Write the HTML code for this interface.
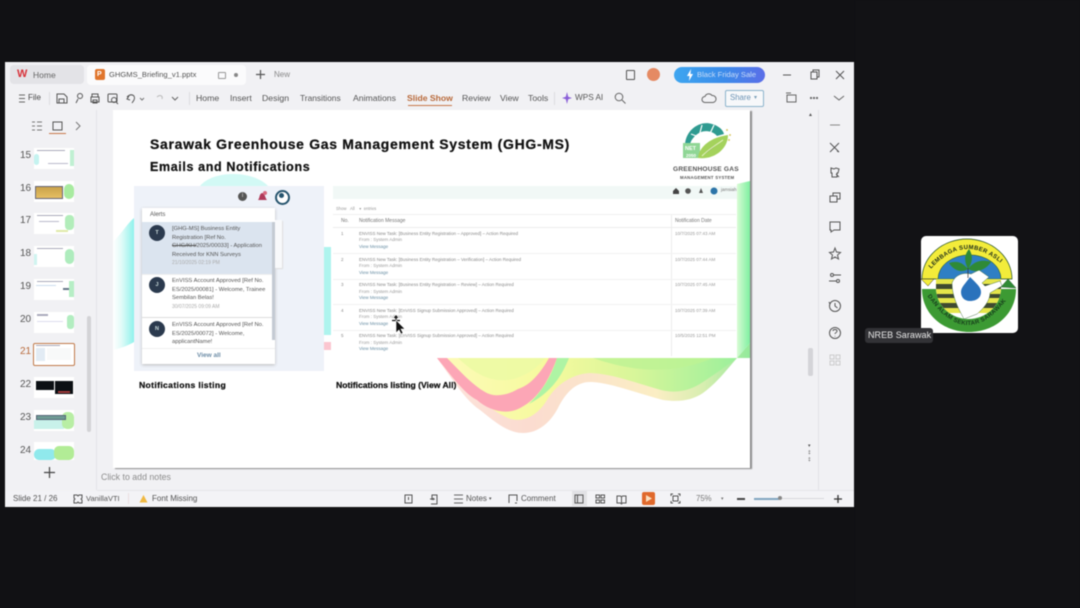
<!DOCTYPE html>
<html><head><meta charset="utf-8"><style>
html,body{margin:0;padding:0;width:1080px;height:608px;overflow:hidden;background:#111114}
body{position:relative;font-family:"Liberation Sans",sans-serif}
#all{position:absolute;left:0;top:0;width:1080px;height:608px;filter:blur(.45px)}
.a{position:absolute}
.t{position:absolute;white-space:nowrap;line-height:1}
.mn{position:absolute;white-space:nowrap;line-height:1;top:94px;font-size:8.700px;color:#555}
.th{position:absolute;left:34px;width:40px;height:21px;background:#fff;overflow:hidden}
.tl{position:absolute;font-size:10px;color:#555;left:20px;width:12px;line-height:1}
.alert{position:absolute;left:172px;font-size:5.800px;line-height:8.500px;color:#555;white-space:nowrap}
.d{position:absolute;left:172px;font-size:5px;color:#aaa;white-space:nowrap;line-height:1}
.av{position:absolute;left:149px;width:16px;height:16px;border-radius:50%;background:#2b3a4e;color:#cdd;font-size:5.500px;font-weight:bold;text-align:center;line-height:16px}
.r1{position:absolute;left:359px;font-size:4.500px;color:#888;white-space:nowrap;line-height:1}
.r2{position:absolute;left:359px;font-size:4.500px;color:#999;white-space:nowrap;line-height:1}
.r3{position:absolute;left:359px;font-size:4.500px;color:#6a8fa5;white-space:nowrap;line-height:1}
.rn{position:absolute;left:341px;font-size:4.500px;color:#888;line-height:1}
.rd{position:absolute;left:675px;font-size:4.500px;color:#999;white-space:nowrap;line-height:1}
.b{-webkit-text-stroke:.25px #111}
svg{position:absolute;overflow:visible}
</style></head><body><div id="all">
<div class="a" style="left:855px;top:0;width:225px;height:608px;background:#121215"></div>
<!-- window -->
<div class="a" style="left:5px;top:62px;width:849px;height:445px;background:#f1f1f4"></div>
<!-- tabs -->
<div class="a" style="left:10px;top:65px;width:74px;height:19px;background:#e3e3e7;border-radius:4px"></div>
<div class="t" style="left:17px;top:69px;font-size:11px;font-weight:bold;color:#d8323a">W</div>
<div class="t" style="left:33px;top:71px;font-size:8.500px;color:#666">Home</div>
<div class="a" style="left:87px;top:65px;width:159px;height:20px;background:#fbfbfc;border-radius:4px"></div>
<div class="a" style="left:95px;top:69px;width:10px;height:11px;background:#e0752c;border-radius:2px"></div>
<div class="t" style="left:97px;top:71px;font-size:7px;color:#fff;font-weight:bold">P</div>
<div class="t" style="left:109px;top:71px;font-size:7.600px;color:#555">GHGMS_Briefing_v1.pptx</div>
<div class="a" style="left:218px;top:72px;width:6px;height:5px;border:1px solid #999;border-radius:1px"></div>
<div class="a" style="left:234px;top:73px;width:4px;height:4px;background:#888;border-radius:50%"></div>
<svg style="left:255px;top:69px" width="11" height="11"><path d="M5.500 1v9M1 5.500h9" stroke="#555" stroke-width="1.200"/></svg>
<div class="t" style="left:274px;top:71px;font-size:8px;color:#888">New</div>
<!-- top right -->
<div class="a" style="left:626px;top:70px;width:7px;height:8px;border:1.200px solid #555;border-radius:1px"></div>
<div class="a" style="left:647px;top:68px;width:13px;height:13px;border-radius:50%;background:#e58a63"></div>
<div class="a" style="left:674px;top:67px;width:91px;height:16px;border-radius:8px;background:linear-gradient(90deg,#3ea6f0,#3b8bea 55%,#5b6ee8)"></div>
<svg style="left:686px;top:69px" width="8" height="12"><path d="M5 0L1 7h2.500L3 12l4-7H4.500z" fill="#fff"/></svg>
<div class="t" style="left:697px;top:71px;font-size:7.600px;color:#c8dcf8">Black Friday Sale</div>
<svg style="left:782px;top:69px" width="62" height="12"><path d="M1 6h8" stroke="#555"/><rect x="29" y="3" width="6" height="7" fill="none" stroke="#555"/><path d="M31 3V1h6v7h-2" fill="none" stroke="#555"/><path d="M54 2l8 8M62 2l-8 8" stroke="#555"/></svg>
<!-- menu bar -->
<svg style="left:18px;top:94px" width="8" height="9"><path d="M1 1h6M1 4.500h6M1 8h6" stroke="#666"/></svg>
<div class="t" style="left:28px;top:94px;font-size:8px;color:#444">File</div>
<div class="a" style="left:49px;top:92px;width:1px;height:13px;background:#dcdce0"></div>
<svg style="left:56px;top:92px" width="125" height="13" fill="none" stroke="#555"><path d="M1 2h7l3 3v6H1zM3 11V7h5v4"/><circle cx="24" cy="4" r="2.500"/><path d="M22 7l-2 4"/><path d="M36 5V2h6v3M35 5h8v5h-8zM37 8h4v3h-4z"/><rect x="52" y="2" width="9" height="8" rx="1"/><circle cx="58" cy="8" r="2.500"/><path d="M60 10l2 2"/><path d="M73 4l-2 3 3 1M71 5c4-4 9-2 7 3l-2 3"/><path d="M84 6l2 2 2-2" stroke="#777"/><path d="M101 5c3-3 6-1 5 2" stroke="#bbb"/><path d="M116 5l3 3 3-3" stroke="#666"/></svg>
<div class="a" style="left:189px;top:92px;width:1px;height:13px;background:#dcdce0"></div>
<div class="mn" style="left:196px">Home</div>
<div class="mn" style="left:230px">Insert</div>
<div class="mn" style="left:262px">Design</div>
<div class="mn" style="left:300px;font-size:8.400px">Transitions</div>
<div class="mn" style="left:353px">Animations</div>
<div class="mn" style="left:407px;color:#b8693a;font-weight:bold;font-size:8.600px">Slide Show</div>
<div class="a" style="left:408px;top:105px;width:44px;height:1px;background:#c8784a"></div>
<div class="mn" style="left:462px">Review</div>
<div class="mn" style="left:500px">View</div>
<div class="mn" style="left:528px">Tools</div>
<div class="a" style="left:554px;top:92px;width:1px;height:13px;background:#dcdce0"></div>
<svg style="left:562px;top:92px" width="10" height="12"><path d="M5 0l1.200 4.800L10 6 6.200 7.200 5 12 3.800 7.200 0 6l3.800-1.200z" fill="#8a5fd8"/></svg>
<div class="mn" style="left:575px;font-size:8.200px">WPS AI</div>
<svg style="left:614px;top:92px" width="12" height="12" fill="none" stroke="#666"><circle cx="5" cy="5" r="3.800"/><path d="M8 8l3.500 3.500"/></svg>
<svg style="left:702px;top:93px" width="13" height="11" fill="none" stroke="#666"><path d="M3 9.500a3 3 0 010-6 4 4 0 017-1 3 3 0 011 7z"/></svg>
<div class="a" style="left:725px;top:90px;width:37px;height:15px;border:1px solid #8cb4cc;border-radius:2px;background:#f7f8fa"></div>
<div class="t" style="left:730px;top:94px;font-size:7.800px;color:#6b93b5">Share</div>
<div class="t" style="left:754px;top:95px;font-size:6px;color:#7a9fb8">▾</div>
<svg style="left:785px;top:92px" width="60" height="13" fill="none" stroke="#666"><rect x="2" y="3" width="9" height="7"/><path d="M1 1h5"/><circle cx="26" cy="6" r=".6"/><circle cx="29" cy="6" r=".6"/><circle cx="32" cy="6" r=".6"/><path d="M49 4l5 4 5-4"/></svg>
<!-- left pane -->
<div class="a" style="left:96px;top:110px;width:1px;height:380px;background:#e4e4e8"></div>
<svg style="left:31px;top:120px" width="55" height="13" fill="none" stroke="#666"><path d="M1 2h3M1 6h3M1 10h3M6 2h5M6 6h5M6 10h5" stroke="#777"/><rect x="22" y="2" width="9" height="8" stroke="#555"/><path d="M45 2l4 4-4 4" stroke="#777"/></svg>
<div class="a" style="left:49px;top:133px;width:17px;height:1px;background:#c8784a"></div>
<div class="tl" style="top:151px">15</div><div class="tl" style="top:184px">16</div><div class="tl" style="top:216px">17</div><div class="tl" style="top:249px">18</div><div class="tl" style="top:282px">19</div><div class="tl" style="top:315px">20</div><div class="tl" style="top:347px;color:#b8693a">21</div><div class="tl" style="top:380px">22</div><div class="tl" style="top:413px">23</div><div class="tl" style="top:446px">24</div>
<div class="th" style="top:148px"><div class="a" style="left:0;top:6px;width:5px;height:11px;background:#c5f3f0;border-radius:3px"></div><div class="a" style="left:36px;top:2px;width:4px;height:16px;background:#c0f0d2"></div><div class="a" style="left:3px;top:2px;width:28px;height:1px;background:#aab"></div><div class="a" style="left:14px;top:15px;width:20px;height:1px;background:#bbc"></div></div>
<div class="th" style="top:181px"><div class="a" style="left:1px;top:5px;width:28px;height:13px;background:linear-gradient(#c9a24a,#e6bf63);border:1px solid #667;box-sizing:border-box"></div><div class="a" style="left:30px;top:3px;width:10px;height:15px;background:#a8eba0;border-radius:5px"></div></div>
<div class="th" style="top:213px"><div class="a" style="left:31px;top:2px;width:9px;height:15px;background:#b2edba;border-radius:4px"></div><div class="a" style="left:3px;top:2px;width:26px;height:1px;background:#aab"></div><div class="a" style="left:5px;top:8px;width:20px;height:1px;background:#bbc"></div><div class="a" style="left:22px;top:17px;width:12px;height:2px;background:#e0eaa8"></div></div>
<div class="th" style="top:246px"><div class="a" style="left:31px;top:3px;width:9px;height:15px;background:#aeecbd;border-radius:5px"></div><div class="a" style="left:3px;top:2px;width:26px;height:1px;background:#aab"></div><div class="a" style="left:0;top:8px;width:3px;height:11px;background:#d0f4f0"></div></div>
<div class="th" style="top:279px"><div class="a" style="left:35px;top:2px;width:5px;height:16px;background:#b6eec5"></div><div class="a" style="left:3px;top:2px;width:26px;height:1px;background:#aab"></div><div class="a" style="left:29px;top:9px;width:6px;height:2px;background:#678"></div><div class="a" style="left:2px;top:6px;width:20px;height:1px;background:#cde"></div></div>
<div class="th" style="top:312px"><div class="a" style="left:33px;top:3px;width:7px;height:14px;background:#b2edc0;border-radius:3px"></div><div class="a" style="left:3px;top:2px;width:11px;height:2px;background:#aab"></div><div class="a" style="left:3px;top:9px;width:26px;height:1px;background:#dde"></div></div>
<div class="a" style="left:33px;top:343px;width:40px;height:21px;border:1.500px solid #c07a4a;border-radius:2px;background:#fff"><div class="a" style="left:2px;top:4px;width:9px;height:13px;background:#e2ebf4"></div><div class="a" style="left:13px;top:4px;width:24px;height:12px;background:#f8f9f9"></div><div class="a" style="left:2px;top:1px;width:24px;height:1px;background:#aab"></div></div>
<div class="th" style="top:377px"><div class="a" style="left:2px;top:4px;width:18px;height:9px;background:#0c1014"></div><div class="a" style="left:21px;top:4px;width:18px;height:13px;background:#0c1014"></div><div class="a" style="left:24px;top:14px;width:12px;height:2px;background:#a03a3a"></div></div>
<div class="th" style="top:410px"><div class="a" style="left:0;top:10px;width:30px;height:9px;background:#c8f1ea"></div><div class="a" style="left:28px;top:2px;width:12px;height:17px;background:#b8eea4;border-radius:5px"></div><div class="a" style="left:2px;top:5px;width:28px;height:3px;background:#6e9a94;border:1px solid #567"></div></div>
<div class="th" style="top:442px;height:18px"><div class="a" style="left:0;top:7px;width:22px;height:11px;background:#90e9ec;border-radius:5px"></div><div class="a" style="left:20px;top:4px;width:20px;height:14px;background:#b2ec96;border-radius:5px"></div></div>
<div class="a" style="left:87px;top:316px;width:4px;height:116px;background:#d3d3d6;border-radius:2px"></div>
<svg style="left:44px;top:467px" width="11" height="11"><path d="M5.500 0v11M0 5.500h11" stroke="#444" stroke-width="1.200"/></svg>
<!-- slide -->
<div class="a" style="left:113px;top:110px;width:637px;height:358px;background:#fff;box-shadow:2px 1px 1px #8a8a8a;overflow:hidden">
<svg style="left:0;top:0" width="637" height="358">
<defs>
<linearGradient id="cy" x1="0" y1="0" x2="1" y2="0"><stop offset="0" stop-color="#fff"/><stop offset=".4" stop-color="#e2fbf8"/><stop offset="1" stop-color="#8ff2ec"/></linearGradient>
<linearGradient id="yg" x1="0" y1="0" x2="1" y2="0"><stop offset="0" stop-color="#fdfab8"/><stop offset=".35" stop-color="#f6fa9e"/><stop offset=".65" stop-color="#d8f69a"/><stop offset="1" stop-color="#9cf09c"/></linearGradient>
<linearGradient id="lo" x1="0" y1="0" x2="1" y2="0"><stop offset="0" stop-color="#fde4dc"/><stop offset=".3" stop-color="#fbdcd0"/><stop offset=".7" stop-color="#fbeec4"/><stop offset=".85" stop-color="#d8eeb0"/><stop offset="1" stop-color="#92ea9a"/></linearGradient>
<linearGradient id="gr" x1="0" y1="0" x2="1" y2="0"><stop offset="0" stop-color="#d8fbd4"/><stop offset="1" stop-color="#7ef0a0"/></linearGradient>
</defs>
<path d="M0 132C8 124 14 114 21 108V232C14 236 8 238 0 240z" fill="url(#cy)"/>
<path d="M87 76C100 60 140 60 155 76z" fill="#d2f9f5"/>
<rect x="211" y="137" width="7" height="88" fill="#aef4ee"/>
<rect x="211" y="232" width="7" height="8" fill="#fbc6d0"/>
<!-- silhouette -->
<path d="M324 248C340 270 352 290 367 300C382 312 395 323 410 323C425 323 437 313 445 298C452 284 462 272 477 272C495 272 520 282 550 290C565 292 578 291 590 283C605 272 615 258 624 248L637 233V248z" fill="url(#lo)"/>
<!-- yellow-green body -->
<path d="M330 248C350 272 365 294 395 308C410 314 425 305 434 290C442 276 458 264 477 263C500 264 520 272 548 280C565 284 578 280 590 272C605 262 615 255 624 248z" fill="url(#yg)"/>
<!-- pink band -->
<path d="M324 248C340 268 352 284 364 290C375 300 392 305 405 299C425 290 436 270 444 248H436C428 262 418 275 405 279C395 285 382 288 372 282C358 274 346 260 334 248z" fill="#fca6b6"/>
<!-- green sliver -->
<path d="M444 248H456C450 262 442 280 416 294C428 282 438 268 444 248z" fill="#aef4a4"/>
<path d="M345 248C360 262 375 272 395 270C410 268 425 258 432 248z" fill="#ecf9a4" opacity=".9"/>
<path d="M480 248C520 262 560 265 600 248z" fill="#bdf294" opacity=".8"/>
<path d="M624 74L637 71V233L624 248z" fill="url(#gr)"/>
</svg>
</div>
<div class="t b" style="left:150px;top:137px;font-size:14px;font-weight:bold;color:#111;letter-spacing:.68px">Sarawak Greenhouse Gas Management System (GHG-MS)</div>
<div class="t b" style="left:150px;top:161px;font-size:12.500px;font-weight:bold;color:#111;letter-spacing:.63px">Emails and Notifications</div>
<!-- ghg logo -->
<svg style="left:680px;top:122px" width="60" height="44">
<path d="M5 24C5 8 20 -2 32 2C39 4 43 8 44 12L37 14C32 8 22 7 15 14C11 18 10 21 10 24z" fill="#2f9b91"/>
<path d="M11 12L32 20M22 3L17 22M34 3L27 18" stroke="#fff" stroke-width="1.200"/>
<rect x="3" y="21" width="17" height="15" fill="#8fd695"/>
<path d="M18 36C19 24 32 15 48 13C48 27 34 38 18 36z" fill="#a4d25c"/>
<path d="M22 34C28 28 36 23 43 18" stroke="#e8f5c8" stroke-width="1"/>
<circle cx="47" cy="8" r="1" fill="#dcc96a"/><circle cx="50" cy="13" r="1" fill="#dcc96a"/><circle cx="49" cy="18" r="1" fill="#dcc96a"/>
<text x="5" y="28" font-size="5.500" font-weight="bold" fill="#fff" font-family="Liberation Sans">NET</text>
<text x="6" y="35" font-size="4.500" font-weight="bold" fill="#fff" font-family="Liberation Sans">2050</text>
</svg>
<div class="t" style="left:673px;top:167px;font-size:6.600px;font-weight:bold;color:#555;letter-spacing:.2px">GREENHOUSE GAS</div>
<div class="t" style="left:680px;top:176px;font-size:4.300px;font-weight:bold;color:#555;letter-spacing:.25px">MANAGEMENT SYSTEM</div>
<!-- left shot -->
<div class="a" style="left:134px;top:186px;width:190px;height:185px;background:#eef2f9"></div>
<div class="a" style="left:333px;top:186px;width:404px;height:172px;background:#fff"></div>
<div class="a" style="left:333px;top:186px;width:404px;height:13px;background:#f1f8f6"></div>
<div class="a" style="left:238px;top:192px;width:9px;height:9px;border-radius:50%;background:#555;color:#ddd;font-size:6px;line-height:9px;text-align:center">i</div>
<svg style="left:257px;top:191px" width="11" height="12"><path d="M1 9C3 7 2 3 5 2C8 2 8 7 10 9z" fill="#b03a5a"/><circle cx="8" cy="2" r="2" fill="#d86a80"/></svg>
<div class="a" style="left:275px;top:190px;width:11px;height:11px;border-radius:50%;background:#fff;border:2px solid #27556e"></div>
<div class="a" style="left:279px;top:193px;width:5px;height:5px;border-radius:50%;background:#27556e"></div>
<div class="a" style="left:142px;top:208px;width:133px;height:156px;background:#fff;box-shadow:0 1px 3px #bbb"></div>
<div class="a" style="left:275px;top:220px;width:7px;height:48px;background:#f8f9fb;box-shadow:1px 1px 1px #ddd"></div>
<div class="t" style="left:150px;top:212px;font-size:6px;color:#555">Alerts</div>
<div class="a" style="left:142px;top:222px;width:133px;height:52px;background:#dbe4ef"></div>
<div class="a" style="left:272px;top:222px;width:3px;height:118px;background:#c4cad3"></div>
<div class="av" style="top:225px">T</div><div class="av" style="top:277px">J</div><div class="av" style="top:321px">N</div>
<div class="alert" style="top:225px">[GHG-MS] Business Entity<br>Registration [Ref No.<br><s>GHG/KH/</s>2025/00033] - Application<br>Received for KNN Surveys</div>
<div class="d" style="top:261px">21/10/2025 02:19 PM</div>
<div class="a" style="left:142px;top:274px;width:130px;height:1px;background:#eee"></div>
<div class="alert" style="top:277px">EnVISS Account Approved [Ref No.<br>ES/2025/00081] - Welcome, Trainee<br>Sembilan Belas!</div>
<div class="d" style="top:305px">30/07/2025 09:09 AM</div>
<div class="a" style="left:142px;top:317px;width:130px;height:1px;background:#ddd"></div>
<div class="alert" style="top:321px">EnVISS Account Approved [Ref No.<br>ES/2025/00072] - Welcome,<br>applicantName!</div>
<div class="a" style="left:142px;top:348px;width:133px;height:1px;background:#f0f0f0"></div>
<div class="t" style="left:197px;top:353px;font-size:6.500px;color:#6c8ca6;font-weight:bold">View all</div>
<div class="t b" style="left:139px;top:381px;font-size:8.600px;font-weight:bold;color:#111;letter-spacing:.35px">Notifications listing</div>
<div class="t b" style="left:336px;top:381px;font-size:8.600px;font-weight:bold;color:#111">Notifications listing (View All)</div>
<!-- right shot -->
<svg style="left:672px;top:187px" width="64" height="8"><path d="M1 4l3-3 3 3v3H1z" fill="#444"/><circle cx="16" cy="4" r="2.800" fill="#555"/><path d="M27 6l2-5 2 5z" fill="#555"/><circle cx="42" cy="4" r="3.500" fill="#2c74a8"/></svg>
<div class="t" style="left:721px;top:188px;font-size:4.500px;color:#777">jamsiah</div>
<div class="t" style="left:336px;top:207px;font-size:4.200px;color:#999">Show&nbsp;&nbsp;&nbsp;All&nbsp;&nbsp;&nbsp;&nbsp;▾&nbsp;&nbsp;entries</div>
<div class="a" style="left:333px;top:214px;width:403px;height:1px;background:#f0f0f0"></div>
<div class="a" style="left:333px;top:227px;width:403px;height:1px;background:#ececec"></div>
<div class="a" style="left:671px;top:215px;width:1px;height:141px;background:#ececec"></div>
<div class="t" style="left:341px;top:219px;font-size:5px;color:#777">No.</div>
<div class="t" style="left:359px;top:219px;font-size:5px;color:#777">Notification Message</div>
<div class="t" style="left:675px;top:219px;font-size:5px;color:#777">Notification Date</div>
<div class="rn" style="top:232px">1</div><div class="r1" style="top:232px">ENVISS New Task: [Business Entity Registration – Approved] – Action Required</div><div class="r2" style="top:238px">From : System Admin</div><div class="r3" style="top:245px">View Message</div><div class="rd" style="top:232px">10/7/2025 07:43 AM</div>
<div class="a" style="left:333px;top:253px;width:403px;height:1px;background:#f2f2f2"></div>
<div class="rn" style="top:258px">2</div><div class="r1" style="top:258px">ENVISS New Task: [Business Entity Registration – Verification] – Action Required</div><div class="r2" style="top:264px">From : System Admin</div><div class="r3" style="top:271px">View Message</div><div class="rd" style="top:258px">10/7/2025 07:44 AM</div>
<div class="a" style="left:333px;top:279px;width:403px;height:1px;background:#f2f2f2"></div>
<div class="rn" style="top:283px">3</div><div class="r1" style="top:283px">ENVISS New Task: [Business Entity Registration – Review] – Action Required</div><div class="r2" style="top:290px">From : System Admin</div><div class="r3" style="top:296px">View Message</div><div class="rd" style="top:283px">10/7/2025 07:45 AM</div>
<div class="a" style="left:333px;top:304px;width:403px;height:1px;background:#f2f2f2"></div>
<div class="rn" style="top:309px">4</div><div class="r1" style="top:309px">ENVISS New Task: [EnVISS Signup Submission Approved] – Action Required</div><div class="r2" style="top:315px">From : System Admin</div><div class="r3" style="top:322px">View Message</div><div class="rd" style="top:309px">10/7/2025 07:39 AM</div>
<div class="a" style="left:333px;top:330px;width:403px;height:1px;background:#f2f2f2"></div>
<div class="rn" style="top:334px">5</div><div class="r1" style="top:334px">ENVISS New Task: [EnVISS Signup Submission Approved] – Action Required</div><div class="r2" style="top:341px">From : System Admin</div><div class="r3" style="top:347px">View Message</div><div class="rd" style="top:334px">10/5/2025 12:51 PM</div>
<!-- cursor -->
<svg style="left:391px;top:315px" width="16" height="20"><path d="M5 5.500V2M3.500 3L5 1l1.500 2M1 5.500h8" stroke="#111" stroke-width="1.200" fill="none"/><path d="M5 5l0 13 3-3 2 4 2-1-2-4h4z" fill="#111" stroke="#fff" stroke-width=".6"/></svg>
<!-- scrollbars and right rail -->
<div class="a" style="left:818px;top:110px;width:1px;height:380px;background:#e2e2e6"></div>
<div class="t" style="left:808px;top:113px;font-size:5px;color:#555">▲</div>
<div class="a" style="left:808px;top:348px;width:5px;height:28px;background:#d4d4d8;border-radius:2px"></div>
<div class="t" style="left:808px;top:443px;font-size:5px;color:#555;line-height:7px;white-space:normal;width:6px">▾<br>‡<br>‡</div>
<svg style="left:828px;top:120px" width="14" height="250" fill="none" stroke="#555" stroke-width="1">
<path d="M2 5h10" stroke="#888"/>
<path d="M2 23l9 9M11 23l-9 9M2 23l2 2M9 31l2 1"/>
<path d="M3 48l3 1 2-1 3 1-1 4-1 0v4H4v-4H3zM8 54l3 3"/>
<path d="M2 76h7v6H2zM5 76v-3h7v6h-3"/>
<path d="M2 102h10v8H6l-3 2v-2H2z"/>
<path d="M7 128l1.500 4 4 .5-3 2.500 1 4-3.500-2-3.500 2 1-4-3-2.500 4-.5z"/>
<circle cx="4" cy="155" r="1.500"/><path d="M6 155h7M1 161h7"/><circle cx="10" cy="161" r="1.500"/>
<circle cx="7" cy="186" r="5.500"/><path d="M7 183v3l2.500 2M1 182l1 2"/>
<circle cx="7" cy="213" r="5.500"/><path d="M5 211c0-2 4-2 4 0s-2 1.500-2 3M7 216v.5"/>
<g stroke="#ccc"><rect x="2" y="235" width="4" height="4"/><rect x="8" y="235" width="4" height="4"/><rect x="2" y="241" width="4" height="4"/><rect x="8" y="241" width="4" height="4"/></g>
</svg>
<!-- notes -->
<div class="t" style="left:101px;top:473px;font-size:8.800px;color:#8d8d8d">Click to add notes</div>
<div class="a" style="left:97px;top:490px;width:757px;height:1px;background:#e6e6ea"></div>
<!-- status -->
<div class="a" style="left:5px;top:491px;width:849px;height:16px;background:#f3f3f6"></div>
<div class="t" style="left:13px;top:495px;font-size:8px;color:#555">Slide 21 / 26</div>
<svg style="left:73px;top:494px" width="10" height="10" fill="none" stroke="#555"><path d="M1 1h3l1 1 1-1h3v3l-1 1 1 1v3H6L5 8 4 9H1V6l1-1-1-1z"/></svg>
<div class="t" style="left:86px;top:495px;font-size:7.500px;color:#555">VanillaVTI</div>
<div class="a" style="left:128px;top:493px;width:1px;height:11px;background:#eadfe0"></div>
<svg style="left:139px;top:494px" width="9" height="9"><path d="M4.500 1L8.500 8.500H.5z" fill="#f0b942"/></svg>
<div class="t" style="left:152px;top:495px;font-size:8px;color:#555">Font Missing</div>
<svg style="left:404px;top:494px" width="34" height="11" fill="none" stroke="#555"><rect x="1" y="1" width="7" height="8"/><path d="M4.500 3v3"/><path d="M28 6V1h5v9h-6M26 5h4l-1-1M30 5l-1 1"/></svg>
<svg style="left:453px;top:494px" width="11" height="10"><path d="M1 1h9M1 5h9M1 9h9" stroke="#666"/></svg>
<div class="t" style="left:466px;top:495px;font-size:8px;color:#555">Notes</div>
<div class="t" style="left:489px;top:497px;font-size:5px;color:#555">▾</div>
<svg style="left:508px;top:494px" width="10" height="10" fill="none" stroke="#555"><path d="M1 9V1h8v6M7 9h2"/></svg>
<div class="t" style="left:521px;top:495px;font-size:8px;color:#555">Comment</div>
<div class="a" style="left:572px;top:491px;width:15px;height:15px;background:#e2e2e5"></div>
<svg style="left:574px;top:494px" width="54" height="10" fill="none" stroke="#555"><rect x="1" y="1" width="8" height="8"/><path d="M3.500 1v8"/><rect x="22" y="1" width="3.500" height="3"/><rect x="27" y="1" width="3.500" height="3"/><rect x="22" y="6" width="3.500" height="3"/><rect x="27" y="6" width="3.500" height="3"/><path d="M43 2h3.500l1 1 1-1H52v7h-3.500l-1 1-1-1H43zM47.500 3v6"/></svg>
<div class="a" style="left:642px;top:492px;width:13px;height:13px;background:#e0692c;border-radius:2px"></div>
<svg style="left:646px;top:495px" width="6" height="7"><path d="M0 0l6 3.500L0 7z" fill="#fbe0c0"/></svg>
<svg style="left:670px;top:493px" width="11" height="11" fill="none" stroke="#555"><path d="M1 3V1h2M8 1h2v2M1 8v2h2M8 10h2V8"/><rect x="3" y="3" width="5" height="5"/></svg>
<div class="t" style="left:696px;top:495px;font-size:7.800px;color:#777">75%</div>
<div class="t" style="left:721px;top:497px;font-size:5px;color:#777">▾</div>
<div class="a" style="left:737px;top:498px;width:8px;height:1.500px;background:#444"></div>
<div class="a" style="left:754px;top:498px;width:70px;height:1px;background:#d8d8dc"></div>
<div class="a" style="left:754px;top:498px;width:25px;height:1.500px;background:#7fa5c0"></div>
<div class="a" style="left:778px;top:496px;width:4px;height:4px;border-radius:50%;background:#888"></div>
<svg style="left:834px;top:495px" width="8" height="8"><path d="M4 0v8M0 4h8" stroke="#333" stroke-width="1.300"/></svg>
<!-- NREB tile -->
<div class="a" style="left:921px;top:236px;width:97px;height:97px;background:#fff;border-radius:5px;overflow:hidden">
<svg style="left:0;top:0" width="97" height="97">
<defs><clipPath id="inner"><path d="M15 43H80V52A32.500 31 0 0115 52z"/></clipPath></defs>
<!-- yellow arch -->
<path d="M1 43A45 40 0 0191 43z" fill="#f3ec3a" stroke="#1a4a20" stroke-width=".7"/>
<!-- blue dome -->
<path d="M17 43A30 23 0 0180 43z" fill="#2f7fc4" stroke="#1a4a20" stroke-width=".5"/>
<!-- green lower disc -->
<path d="M1 53H95C95 78 74 96 48 96C22 96 1 78 1 53z" fill="#3c9a33"/>
<!-- triangle and mountain -->
<path d="M0 43h13l-6 7z" fill="#f3ec3a" stroke="#333" stroke-width=".5"/>
<path d="M80 51l7-8 8 9z" fill="#2f8a36" stroke="#1a4a20" stroke-width=".4"/>
<!-- inner stripes -->
<path d="M15 43H80V52A32.500 31 0 0115 52z" fill="#fff"/>
<g clip-path="url(#inner)">
<rect x="15" y="43" width="66" height="5" fill="#e6e64a"/>
<rect x="15" y="48" width="66" height="5" fill="#3f4a30"/>
<rect x="15" y="53" width="66" height="5" fill="#e6e64a"/>
<rect x="15" y="58" width="66" height="4" fill="#3f4a30"/>
<rect x="15" y="62" width="66" height="5" fill="#e6e64a"/>
<rect x="15" y="67" width="66" height="5" fill="#3f4a30"/>
<rect x="15" y="72" width="66" height="5" fill="#e6e64a"/>
</g>
<!-- hand -->
<path d="M31 47C34 39 42 36 50 38L58 34L68 41L61 47L64 50L79 45L81 50L69 57C69 65 62 73 56 78L43 83C37 72 31 60 31 47z" fill="#fff" stroke="#2a5a2a" stroke-width=".4"/>
<path d="M49 41C55 47 60 51 60 56C60 62 55 65 49 65C43 65 40 61 40 56C40 51 45 47 49 41z" fill="#2a72bc"/>
<!-- leaves -->
<path d="M47 33C40 25 35 25 28 27C33 35 41 37 47 33zM47 33C53 25 62 23 70 26C64 35 54 37 47 33zM47 33C43 25 43 19 48 13C52 19 52 26 47 33z" fill="#2f8a36"/>
<path d="M47 32v10" stroke="#333" stroke-width=".7"/>
<path id="arc1" d="M8 35Q46 -9 88 35" fill="none"/>
<text font-size="6" font-weight="bold" fill="#1a2a1a" font-family="Liberation Sans" letter-spacing=".35"><textPath href="#arc1" startOffset="3%">LEMBAGA SUMBER ASLI</textPath></text>
<path id="arc2" d="M5 58Q47 120 90 58" fill="none"/>
<text font-size="6" font-weight="bold" fill="#173d1c" font-family="Liberation Sans" letter-spacing=".3"><textPath href="#arc2" startOffset="2%">DAN ALAM SEKITAR SARAWAK</textPath></text>
</svg>
</div>
<div class="a" style="left:865px;top:328px;width:68px;height:15px;background:#323236;border-radius:3px"></div>
<div class="t" style="left:868px;top:331px;font-size:9px;color:#e8e8e8;letter-spacing:.05px">NREB Sarawak</div>
</div></body></html>
